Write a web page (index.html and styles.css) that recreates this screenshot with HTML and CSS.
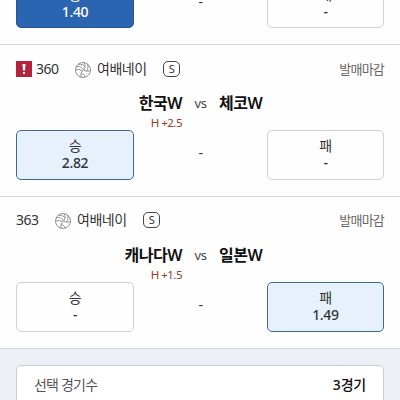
FILE: index.html
```
<!DOCTYPE html>
<html lang="ko">
<head>
  <meta charset="UTF-8">
  <meta name="viewport" content="width=device-width, initial-scale=1.0">
  <title>여배네이</title>
  <link rel="stylesheet" href="styles.css">
</head>
<body>
  <svg width="0" height="0" class="defs">
    <symbol id="ball" viewBox="0 0 16 16">
      <circle cx="8" cy="8" r="7.500"/>
      <path d="M1 5C4 3.800 7.500 5 8.500 8C10.500 6 10.500 3 9 .6M8.500 8C6.500 9.500 5.500 12 6 15.200M8.500 8C10.500 9.500 13 9.500 15.300 8.500M3.500 2.200C6.500 2 9 3.200 10 4.800M.6 8.500C2.500 7 5 7 7.300 9M12.500 2.200C13.500 4.500 13 7 11.500 9M10 15C9.500 13 8.500 12 6.300 11.500"/>
    </symbol>
  </svg>

  <section class="match match-cut">
    <div class="odds">
      <div class="pick selected"><span>승</span><b>1.40</b></div>
      <span class="draw">-</span>
      <div class="pick"><span>패</span><b>-</b></div>
    </div>
  </section>

  <section class="match">
    <div class="head">
      <span class="alert"><svg viewBox="0 0 16 16"><path d="M6.500 3h3L9 9.500H7zM7 11h2v2H7z"/></svg></span>
      <span class="num">360</span>
      <svg class="ball"><use href="#ball"/></svg>
      <span class="league">여배네이</span>
      <span class="single">S</span>
      <span class="state">발매마감</span>
    </div>
    <div class="teams">
      <span class="home">한국W</span>
      <span class="vs">vs</span>
      <span class="away">체코W</span>
    </div>
    <div class="handicap">H +2.5</div>
    <div class="odds">
      <div class="pick win"><span>승</span><b>2.82</b></div>
      <span class="draw">-</span>
      <div class="pick"><span>패</span><b>-</b></div>
    </div>
  </section>

  <section class="match match-last">
    <div class="head">
      <span class="num">363</span>
      <svg class="ball"><use href="#ball"/></svg>
      <span class="league">여배네이</span>
      <span class="single">S</span>
      <span class="state">발매마감</span>
    </div>
    <div class="teams">
      <span class="home">캐나다W</span>
      <span class="vs">vs</span>
      <span class="away">일본W</span>
    </div>
    <div class="handicap">H +1.5</div>
    <div class="odds">
      <div class="pick"><span>승</span><b>-</b></div>
      <span class="draw">-</span>
      <div class="pick win"><span>패</span><b>1.49</b></div>
    </div>
  </section>

  <section class="summary">
    <div class="card">
      <span>선택 경기수</span>
      <strong>3경기</strong>
    </div>
  </section>
</body>
</html>
```
FILE: styles.css
```
* {
  box-sizing: border-box;
}
body {
  margin: 0;
  height: 400px;
  overflow: hidden;
  background: #fefefe;
  color: #333;
  font-family: "Noto Sans", "Noto Sans CJK KR", sans-serif;
  font-size: 14px;
  letter-spacing: -0.5px;
}
.defs {
  position: absolute;
}
.match {
  height: 152px;
  padding: 14px 16px 0;
  border-top: 1px solid #d4d4d4;
}
.match-cut {
  display: flex;
  flex-direction: column;
  justify-content: flex-end;
  height: 44px;
  padding-bottom: 16px;
  border-top: 0;
}
.match-last {
  padding-top: 13px;
}
.match-last .teams {
  margin-top: 15px;
}
.head {
  display: flex;
  align-items: center;
  height: 20px;
  line-height: 20px;
}
.alert {
  width: 16px;
  height: 16px;
  margin-right: 4px;
  background: #b3243c;
}
.alert svg {
  display: block;
  fill: #fff;
}
.num {
  width: 23px;
}
.ball {
  width: 16px;
  height: 16px;
  margin: 2px 6px 0 16px;
  fill: none;
  stroke: #777;
  stroke-width: 0.8;
}
.league {
  width: 50px;
  letter-spacing: -0.5px;
  white-space: nowrap;
}
.single {
  width: 17px;
  height: 16px;
  margin-left: 16px;
  border: 1px solid #444;
  border-radius: 5px;
  font-size: 11px;
  line-height: 14px;
  text-align: center;
}
.state {
  margin-left: auto;
  color: #666;
  font-size: 13px;
  letter-spacing: -0.8px;
}
.teams {
  display: flex;
  height: 20px;
  margin-top: 14px;
  color: #111;
  font-size: 16px;
  font-weight: 600;
  line-height: 20px;
}
.home {
  width: 166px;
  text-align: right;
}
.vs {
  width: 37px;
  color: #444;
  font-size: 13px;
  font-weight: 400;
  text-align: center;
}
.handicap {
  width: 166px;
  height: 17px;
  color: #934024;
  font-size: 11.5px;
  line-height: 20px;
  text-align: right;
}
.odds {
  display: flex;
  flex-shrink: 0;
  align-items: center;
  justify-content: space-between;
}
.draw {
  padding-bottom: 4px;
}
.pick {
  display: flex;
  flex-direction: column;
  width: 117px;
  height: 49.5px;
  padding-top: 6px;
  border: 1px solid #d0d0d0;
  border-radius: 5px;
  line-height: 17px;
  text-align: center;
}
.pick:first-child {
  width: 118px;
}
.pick b {
  font-weight: 500;
  letter-spacing: -0.3px;
}
.pick.win {
  border-color: #42688c;
  background: #e7f1fc;
}
.pick.selected {
  border-color: #265694;
  background: #2b64b0;
  color: #fff;
}
.summary {
  height: 52px;
  padding: 16px 16px 0;
  border-top: 1px solid #d8dce2;
  background: #edf1f7;
}
.card {
  display: flex;
  align-items: center;
  justify-content: space-between;
  height: 50px;
  padding: 0 17px 12px;
  border: 1px solid #c9ccd2;
  border-radius: 5px;
  background: #fff;
  color: #555;
  letter-spacing: -0.8px;
}
.card strong {
  color: #111;
  font-weight: 500;
  letter-spacing: -0.2px;
}
```
